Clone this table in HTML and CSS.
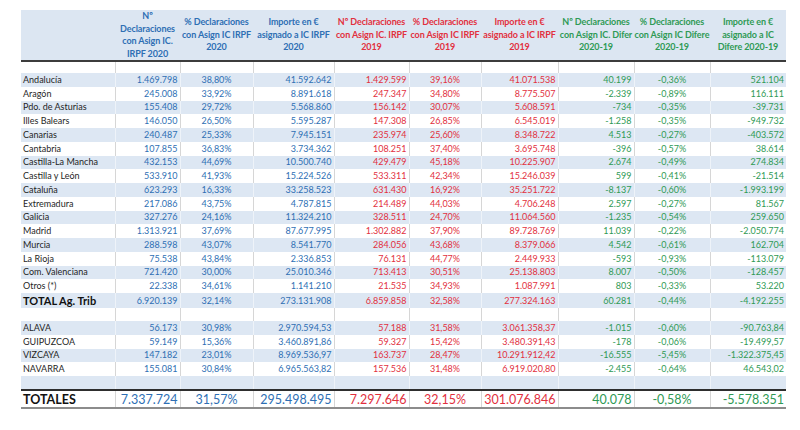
FILE: index.html
```html
<!DOCTYPE html>
<html lang="es">
<head>
<meta charset="utf-8">
<title>Declaraciones con Asignación IC IRPF</title>
<link rel="stylesheet" href="styles.css">
</head>
<body>
<table class="sheet">
  <colgroup>
    <col class="c-label"><col class="c1"><col class="c2"><col class="c3"><col class="c4"><col class="c5"><col class="c6"><col class="c7"><col class="c8"><col class="c9">
  </colgroup>
  <thead>
    <tr class="head">
      <th></th>
      <th class="blue">Nº<br>Declaraciones<br>con Asign IC.<br>IRPF 2020</th>
      <th class="blue">% Declaraciones<br>con Asign IC IRPF<br>2020</th>
      <th class="blue">Importe en €<br>asignado a IC IRPF<br>2020</th>
      <th class="red">Nº Declaraciones<br>con Asign IC. IRPF<br>2019</th>
      <th class="red">% Declaraciones<br>con Asign IC IRPF<br>2019</th>
      <th class="red">Importe en €<br>asignado a IC IRPF<br>2019</th>
      <th class="green">Nº Declaraciones<br>con Asign IC. Difer<br>2020-19</th>
      <th class="green">% Declaraciones<br>con Asign IC Difere<br>2020-19</th>
      <th class="green">Importe en €<br>asignado a IC<br>Difere 2020-19</th>
    </tr>
  </thead>
  <tbody>
    <tr class="spacer w"><td></td><td></td><td></td><td></td><td></td><td></td><td></td><td></td><td></td><td></td></tr>
    <tr class="b"><td class="lbl">Andalucía</td><td class="num blue">1.469.798</td><td class="pct blue">38,80%</td><td class="num blue">41.592.642</td><td class="num red">1.429.599</td><td class="pct red">39,16%</td><td class="num red">41.071.538</td><td class="num green">40.199</td><td class="pct green">-0,36%</td><td class="num green">521.104</td></tr>
    <tr class="w"><td class="lbl">Aragón</td><td class="num blue">245.008</td><td class="pct blue">33,92%</td><td class="num blue">8.891.618</td><td class="num red">247.347</td><td class="pct red">34,80%</td><td class="num red">8.775.507</td><td class="num green">-2.339</td><td class="pct green">-0,89%</td><td class="num green">116.111</td></tr>
    <tr class="b"><td class="lbl">Pdo. de Asturias</td><td class="num blue">155.408</td><td class="pct blue">29,72%</td><td class="num blue">5.568.860</td><td class="num red">156.142</td><td class="pct red">30,07%</td><td class="num red">5.608.591</td><td class="num green">-734</td><td class="pct green">-0,35%</td><td class="num green">-39.731</td></tr>
    <tr class="w"><td class="lbl">Illes Balears</td><td class="num blue">146.050</td><td class="pct blue">26,50%</td><td class="num blue">5.595.287</td><td class="num red">147.308</td><td class="pct red">26,85%</td><td class="num red">6.545.019</td><td class="num green">-1.258</td><td class="pct green">-0,35%</td><td class="num green">-949.732</td></tr>
    <tr class="b"><td class="lbl">Canarias</td><td class="num blue">240.487</td><td class="pct blue">25,33%</td><td class="num blue">7.945.151</td><td class="num red">235.974</td><td class="pct red">25,60%</td><td class="num red">8.348.722</td><td class="num green">4.513</td><td class="pct green">-0,27%</td><td class="num green">-403.572</td></tr>
    <tr class="w"><td class="lbl">Cantabria</td><td class="num blue">107.855</td><td class="pct blue">36,83%</td><td class="num blue">3.734.362</td><td class="num red">108.251</td><td class="pct red">37,40%</td><td class="num red">3.695.748</td><td class="num green">-396</td><td class="pct green">-0,57%</td><td class="num green">38.614</td></tr>
    <tr class="b"><td class="lbl">Castilla-La Mancha</td><td class="num blue">432.153</td><td class="pct blue">44,69%</td><td class="num blue">10.500.740</td><td class="num red">429.479</td><td class="pct red">45,18%</td><td class="num red">10.225.907</td><td class="num green">2.674</td><td class="pct green">-0,49%</td><td class="num green">274.834</td></tr>
    <tr class="w"><td class="lbl">Castilla y León</td><td class="num blue">533.910</td><td class="pct blue">41,93%</td><td class="num blue">15.224.526</td><td class="num red">533.311</td><td class="pct red">42,34%</td><td class="num red">15.246.039</td><td class="num green">599</td><td class="pct green">-0,41%</td><td class="num green">-21.514</td></tr>
    <tr class="b"><td class="lbl">Cataluña</td><td class="num blue">623.293</td><td class="pct blue">16,33%</td><td class="num blue">33.258.523</td><td class="num red">631.430</td><td class="pct red">16,92%</td><td class="num red">35.251.722</td><td class="num green">-8.137</td><td class="pct green">-0,60%</td><td class="num green">-1.993.199</td></tr>
    <tr class="w"><td class="lbl">Extremadura</td><td class="num blue">217.086</td><td class="pct blue">43,75%</td><td class="num blue">4.787.815</td><td class="num red">214.489</td><td class="pct red">44,03%</td><td class="num red">4.706.248</td><td class="num green">2.597</td><td class="pct green">-0,27%</td><td class="num green">81.567</td></tr>
    <tr class="b"><td class="lbl">Galicia</td><td class="num blue">327.276</td><td class="pct blue">24,16%</td><td class="num blue">11.324.210</td><td class="num red">328.511</td><td class="pct red">24,70%</td><td class="num red">11.064.560</td><td class="num green">-1.235</td><td class="pct green">-0,54%</td><td class="num green">259.650</td></tr>
    <tr class="w"><td class="lbl">Madrid</td><td class="num blue">1.313.921</td><td class="pct blue">37,69%</td><td class="num blue">87.677.995</td><td class="num red">1.302.882</td><td class="pct red">37,90%</td><td class="num red">89.728.769</td><td class="num green">11.039</td><td class="pct green">-0,22%</td><td class="num green">-2.050.774</td></tr>
    <tr class="b"><td class="lbl">Murcia</td><td class="num blue">288.598</td><td class="pct blue">43,07%</td><td class="num blue">8.541.770</td><td class="num red">284.056</td><td class="pct red">43,68%</td><td class="num red">8.379.066</td><td class="num green">4.542</td><td class="pct green">-0,61%</td><td class="num green">162.704</td></tr>
    <tr class="w"><td class="lbl">La Rioja</td><td class="num blue">75.538</td><td class="pct blue">43,84%</td><td class="num blue">2.336.853</td><td class="num red">76.131</td><td class="pct red">44,77%</td><td class="num red">2.449.933</td><td class="num green">-593</td><td class="pct green">-0,93%</td><td class="num green">-113.079</td></tr>
    <tr class="b"><td class="lbl">Com. Valenciana</td><td class="num blue">721.420</td><td class="pct blue">30,00%</td><td class="num blue">25.010.346</td><td class="num red">713.413</td><td class="pct red">30,51%</td><td class="num red">25.138.803</td><td class="num green">8.007</td><td class="pct green">-0,50%</td><td class="num green">-128.457</td></tr>
    <tr class="w"><td class="lbl">Otros (*)</td><td class="num blue">22.338</td><td class="pct blue">34,61%</td><td class="num blue">1.141.210</td><td class="num red">21.535</td><td class="pct red">34,93%</td><td class="num red">1.087.991</td><td class="num green">803</td><td class="pct green">-0,33%</td><td class="num green">53.220</td></tr>
    <tr class="b subtotal"><td class="lbl">TOTAL Ag. Trib</td><td class="num blue">6.920.139</td><td class="pct blue">32,14%</td><td class="num blue">273.131.908</td><td class="num red">6.859.858</td><td class="pct red">32,58%</td><td class="num red">277.324.163</td><td class="num green">60.281</td><td class="pct green">-0,44%</td><td class="num green">-4.192.255</td></tr>
    <tr class="spacer2 w"><td></td><td></td><td></td><td></td><td></td><td></td><td></td><td></td><td></td><td></td></tr>
    <tr class="b"><td class="lbl">ALAVA</td><td class="num blue">56.173</td><td class="pct blue">30,98%</td><td class="num blue">2.970.594,53</td><td class="num red">57.188</td><td class="pct red">31,58%</td><td class="num red">3.061.358,37</td><td class="num green">-1.015</td><td class="pct green">-0,60%</td><td class="num green">-90.763,84</td></tr>
    <tr class="w"><td class="lbl">GUIPUZCOA</td><td class="num blue">59.149</td><td class="pct blue">15,36%</td><td class="num blue">3.460.891,86</td><td class="num red">59.327</td><td class="pct red">15,42%</td><td class="num red">3.480.391,43</td><td class="num green">-178</td><td class="pct green">-0,06%</td><td class="num green">-19.499,57</td></tr>
    <tr class="b"><td class="lbl">VIZCAYA</td><td class="num blue">147.182</td><td class="pct blue">23,01%</td><td class="num blue">8.969.536,97</td><td class="num red">163.737</td><td class="pct red">28,47%</td><td class="num red">10.291.912,42</td><td class="num green">-16.555</td><td class="pct green">-5,45%</td><td class="num green">-1.322.375,45</td></tr>
    <tr class="w"><td class="lbl">NAVARRA</td><td class="num blue">155.081</td><td class="pct blue">30,84%</td><td class="num blue">6.965.563,82</td><td class="num red">157.536</td><td class="pct red">31,48%</td><td class="num red">6.919.020,80</td><td class="num green">-2.455</td><td class="pct green">-0,64%</td><td class="num green">46.543,02</td></tr>
    <tr class="spacer2 b"><td></td><td></td><td></td><td></td><td></td><td></td><td></td><td></td><td></td><td></td></tr>
  </tbody>
  <tfoot>
    <tr class="grand"><td class="lbl">TOTALES</td><td class="num blue">7.337.724</td><td class="pct blue">31,57%</td><td class="num blue">295.498.495</td><td class="num red">7.297.646</td><td class="pct red">32,15%</td><td class="num red">301.076.846</td><td class="num green">40.078</td><td class="pct green">-0,58%</td><td class="num green">-5.578.351</td></tr>
  </tfoot>
</table>
</body>
</html>
```

FILE: styles.css
```css
html, body {
  margin: 0;
  padding: 0;
  background: #ffffff;
}

body {
  padding: 10px 0 0 21px;
  font-family: "Lato", "Liberation Sans", sans-serif;
  color: #1f1f1f;
}

.sheet {
  border-collapse: collapse;
  table-layout: fixed;
  width: 765px;
}

.c-label { width: 94px; }
.c1 { width: 65px; }
.c2 { width: 73px; }
.c3 { width: 81px; }
.c4 { width: 75px; }
.c5 { width: 72px; }
.c6 { width: 77px; }
.c7 { width: 76px; }
.c8 { width: 76px; }
.c9 { width: 76px; }

.blue { color: #2e6fb4; }
.red { color: #e2303e; }
.green { color: #2f9a55; }

.head th {
  background: #dce6f2;
  height: 49px;
  padding: 0;
  font-size: 9px;
  line-height: 12.5px;
  font-weight: 700;
  text-align: center;
  vertical-align: middle;
  border-bottom: 2px solid #3c3c3c;
  letter-spacing: -0.1px;
}

.sheet td {
  padding: 0;
  font-size: 9px;
  line-height: 12px;
  height: 13.75px;
  white-space: nowrap;
  overflow: hidden;
  border-left: 1px solid #d6d6d6;
}

.sheet td:first-child { border-left: none; }

.b td {
  background: #dde7f3;
  border-left-color: #eef3f9;
}

.w td { background: #ffffff; }

.spacer td { height: 11px; }
.spacer2 td { height: 13px; }

.lbl {
  text-align: left;
  padding-left: 2px !important;
  color: #1f1f1f;
}

.num {
  text-align: right;
  padding-right: 2px !important;
}

.pct { text-align: center; }

.subtotal td { height: 15px; }
.subtotal .lbl {
  font-size: 11px;
  font-weight: 700;
  color: #111;
}

.grand td {
  height: 16px;
  font-size: 12.5px;
  line-height: 15px;
  border-top: 2px solid #2e2e2e;
  border-bottom: 2px solid #8c8c8c;
  background: #fff;
}

.grand .lbl {
  font-weight: 700;
  color: #111;
}
```
